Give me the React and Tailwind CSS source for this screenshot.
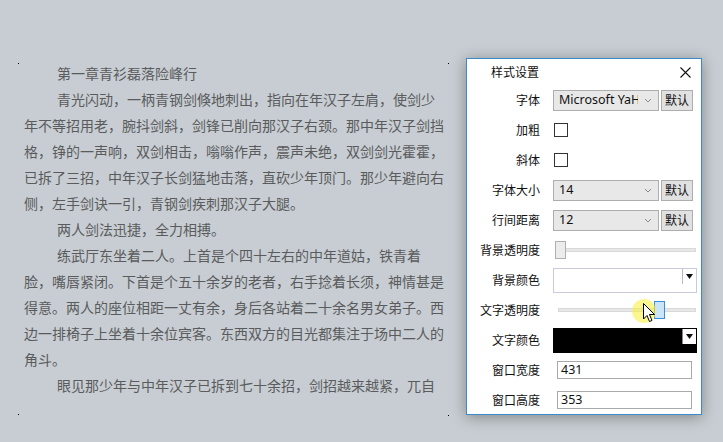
import React from "react";

const lines = [
  { t: "第一章青衫磊落险峰行", indent: true },
  { t: "青光闪动，一柄青钢剑倏地刺出，指向在年汉子左肩，使剑少", indent: true },
  { t: "年不等招用老，腕抖剑斜，剑锋已削向那汉子右颈。那中年汉子剑挡" },
  { t: "格，铮的一声响，双剑相击，嗡嗡作声，震声未绝，双剑剑光霍霍，" },
  { t: "已拆了三招，中年汉子长剑猛地击落，直砍少年顶门。那少年避向右" },
  { t: "侧，左手剑诀一引，青钢剑疾刺那汉子大腿。" },
  { t: "两人剑法迅捷，全力相搏。", indent: true },
  { t: "练武厅东坐着二人。上首是个四十左右的中年道姑，铁青着", indent: true },
  { t: "脸，嘴唇紧闭。下首是个五十余岁的老者，右手捻着长须，神情甚是" },
  { t: "得意。两人的座位相距一丈有余，身后各站着二十余名男女弟子。西" },
  { t: "边一排椅子上坐着十余位宾客。东西双方的目光都集注于场中二人的" },
  { t: "角斗。" },
  { t: "眼见那少年与中年汉子已拆到七十余招，剑招越来越紧，兀自", indent: true },
];

const cjk = { fontFamily: '"Noto Sans CJK SC", "Noto Sans", sans-serif' };

function Chevron() {
  return (
    <svg width="8" height="5" viewBox="0 0 8 5" className="shrink-0">
      <path d="M1 1 L4 4 L7 1" fill="none" stroke="#8a8a8a" strokeWidth="1" />
    </svg>
  );
}

function Select({ value, clip }) {
  return (
    <div className="flex items-center w-[106px] h-[21px] bg-[#e8e8e8] border border-[#adadad] pl-[5px] pr-[6px]">
      <span className={"overflow-hidden whitespace-nowrap text-[12.5px] text-[#111] " + (clip ? "w-[79px]" : "flex-1")} style={{ fontFamily: '"Noto Sans", sans-serif' }}>
        {value}
      </span>
      <span className="flex-1" />
      <Chevron />
    </div>
  );
}

function DefaultBtn() {
  return (
    <div className="ml-[2px] w-[32px] h-[21px] bg-[#e1e1e1] border border-[#adadad] flex items-center justify-center text-[12px] text-[#111]">
      默认
    </div>
  );
}

function Check() {
  return <div className="ml-[1px] w-[14px] h-[14px] bg-white border border-[#333]" />;
}

function Slider({ left, active, trackStart }) {
  return (
    <div className="relative w-[143px] h-[20px]">
      <div className="absolute top-[8px] right-0 h-[4px] bg-[#e7e7e7] border border-[#d9d9d9]" style={{ left: trackStart }} />
      <div
        className={"absolute top-[1px] w-[11px] h-[18px] border " + (active ? "bg-[#cce4f7] border-[#3d8ed6]" : "bg-[#ececec] border-[#b0b0b0]")}
        style={{ left }}
      />
    </div>
  );
}

function ColorBox({ dark }) {
  return (
    <div className={"relative w-[144px] h-[25px] border " + (dark ? "bg-black border-black" : "bg-white border-[#c9cbdc]")}>
      <div className={"absolute top-0 right-0 w-[14px] h-[15px] flex items-center justify-center border-l " + (dark ? "bg-white border-[#888]" : "bg-white border-[#b8b8c8]")}>
        <svg width="7" height="5" viewBox="0 0 7 5">
          <path d="M0 0 H7 L3.5 5 Z" fill="#111" />
        </svg>
      </div>
    </div>
  );
}

function Input({ value }) {
  return (
    <div className="ml-[4px] w-[135px] h-[18px] bg-white border border-[#a9a9a9] flex items-center pl-[3px] text-[12.5px] text-[#111]" style={{ fontFamily: '"Noto Sans", sans-serif' }}>
      {value}
    </div>
  );
}

function Row({ label, children }) {
  return (
    <div className="flex items-center h-[30px]">
      <div className="w-[73px] text-right text-[12px] text-[#111] whitespace-nowrap">{label}</div>
      <div className="ml-[13px] flex items-center">{children}</div>
    </div>
  );
}

export default function App() {
  return (
    <div className="w-[723px] h-[442px] bg-[#c7cdd2] flex items-start overflow-hidden" style={cjk}>
      <div className="relative ml-[18px] mt-[60px] w-[431px] h-[356px] pl-[6px] text-[14px] leading-[26px] text-[#5a5b5d]">
        <div className="absolute left-0 top-[3px] w-[1px] h-[1px] bg-black" />
        <div className="absolute left-[430px] top-[3px] w-[1px] h-[1px] bg-black" />
        <div className="absolute left-0 top-[354px] w-[1px] h-[1px] bg-black" />
        <div className="absolute left-[430px] top-[355px] w-[1px] h-[1px] bg-black" />
        {lines.map((l, i) => (
          <div key={i} className={"whitespace-nowrap " + (l.indent ? "pl-[33px]" : "")}>
            {l.t}
          </div>
        ))}
      </div>

      <div className="relative ml-[17px] mt-[58px] w-[236px] h-[357px] bg-white border border-[#3a8bcb] shadow-[0_2px_14px_rgba(0,0,0,0.35)]">
        <div className="flex items-center h-[26px] pl-[24px] pr-[10px]">
          <span className="text-[12px] text-[#111]">样式设置</span>
          <span className="flex-1" />
          <svg width="11" height="11" viewBox="0 0 11 11">
            <path d="M0.5 0.5 L10.5 10.5 M10.5 0.5 L0.5 10.5" stroke="#111" strokeWidth="1.1" />
          </svg>
        </div>

        <Row label="字体">
          <Select value="Microsoft YaHei" clip />
          <DefaultBtn />
        </Row>
        <Row label="加粗">
          <Check />
        </Row>
        <Row label="斜体">
          <Check />
        </Row>
        <Row label="字体大小">
          <Select value="14" />
          <DefaultBtn />
        </Row>
        <Row label="行间距离">
          <Select value="12" />
          <DefaultBtn />
        </Row>
        <Row label="背景透明度">
          <Slider left={2} trackStart={3} />
        </Row>
        <Row label="背景颜色">
          <ColorBox />
        </Row>
        <Row label="文字透明度">
          <Slider left={101} active trackStart={5} />
        </Row>
        <Row label="文字颜色">
          <ColorBox dark />
        </Row>
        <Row label="窗口宽度">
          <Input value="431" />
        </Row>
        <Row label="窗口高度">
          <Input value="353" />
        </Row>

        <div className="absolute left-[165px] top-[240px] w-[24px] h-[24px] rounded-full bg-[rgba(248,240,70,0.6)]" />
        <svg className="absolute left-[176px] top-[244px]" width="13" height="20" viewBox="0 0 13 20">
          <path d="M0.5 0.5 L0.5 16 L4 12.5 L6.5 18.5 L9 17.5 L6.5 11.5 L11.5 11.5 Z" fill="white" stroke="black" strokeWidth="1" strokeLinejoin="round" />
        </svg>
      </div>
    </div>
  );
}
